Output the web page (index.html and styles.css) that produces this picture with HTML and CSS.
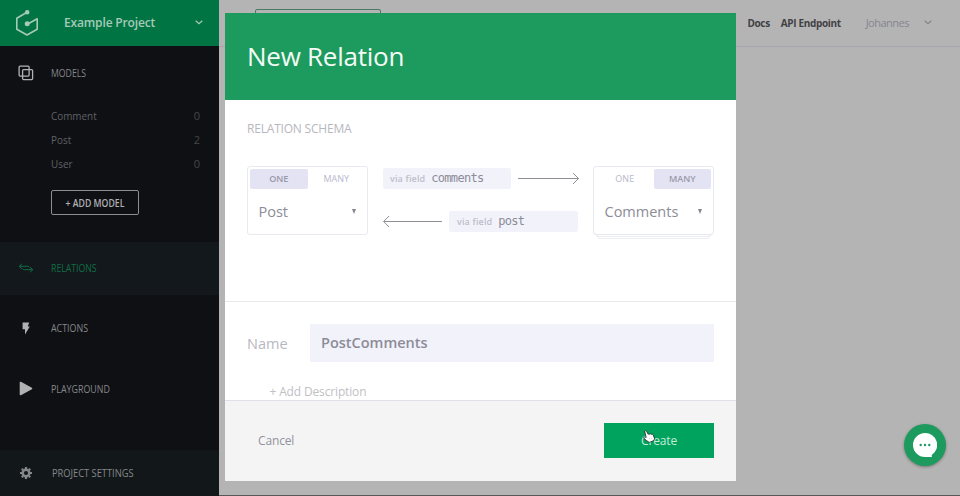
FILE: index.html
```html
<!DOCTYPE html>
<html lang="en">
<head>
<meta charset="utf-8">
<title>New Relation</title>
<link rel="stylesheet" href="styles.css">
</head>
<body>
<div class="app">
  <aside class="sidebar">
    <div class="project">
      <svg class="logo" width="24" height="28" viewBox="0 0 24 28" fill="none" stroke="#a6cab8" stroke-width="1.6" stroke-linejoin="round" stroke-linecap="round"><path d="M12 3.3 1.8 9.2v11L12 26l10.2-5.8V9.8L12.8 15"/><circle cx="12.2" cy="3.2" r="1.5" fill="#a6cab8"/><circle cx="12.2" cy="14.8" r="1.7" fill="#a6cab8"/></svg>
      <span class="project-name">Example Project</span>
      <svg width="8" height="5" viewBox="0 0 8 5" fill="none" stroke="#a6cab8" stroke-width="1.2"><path d="M.7.8 4 3.7 7.3.8"/></svg>
    </div>
    <div class="nav models">
      <span class="icon"><svg width="16" height="16" viewBox="0 0 16 16" fill="none" stroke="#b0b1b3" stroke-width="1.3"><rect x="1.1" y="1.1" width="10" height="10" rx="1"/><rect x="4.6" y="4.6" width="10" height="10" rx="1"/></svg></span>
      <span class="nav-label">MODELS</span>
    </div>
    <ul class="model-list">
      <li><span class="model-name">Comment</span><span class="count">0</span></li>
      <li><span class="model-name">Post</span><span class="count">2</span></li>
      <li><span class="model-name">User</span><span class="count">0</span></li>
    </ul>
    <button class="add-model"><span>+ ADD MODEL</span></button>
    <div class="nav relations">
      <span class="icon"><svg width="16" height="10" viewBox="0 0 16 10" fill="none" stroke="#126d46" stroke-width="1"><path d="M4 .8 1.2 3.3 4 5.8M1.2 3.3h8.5q1.5 0 1.5 1M12 4.2l2.8 2.5L12 9.2M14.8 6.7H6.3q-1.5 0-1.5-1"/></svg></span>
      <span class="nav-label">RELATIONS</span>
    </div>
    <div class="nav actions">
      <span class="icon"><svg width="8" height="13" viewBox="0 0 8 13" fill="#b0b1b3"><path d="M.6.5h6.6L5.8 4.4h2L3 12.4V7.2H.6z"/></svg></span>
      <span class="nav-label">ACTIONS</span>
    </div>
    <div class="nav playground">
      <span class="icon"><svg width="14" height="15" viewBox="0 0 14 15" fill="#b0b1b3" stroke="#b0b1b3" stroke-width="1.6" stroke-linejoin="round"><path d="M1.5 1.5v12L12.5 7.5z"/></svg></span>
      <span class="nav-label">PLAYGROUND</span>
    </div>
    <div class="nav settings">
      <span class="icon"><svg width="12" height="12" viewBox="0 0 12 12" fill="none" stroke="#85878a"><circle cx="6" cy="6" r="3.3" stroke-width="2.4"/><path stroke-width="2.2" d="M6 0v2M6 10v2M0 6h2M10 6h2M1.8 1.8l1.3 1.3M8.9 8.9l1.3 1.3M1.8 10.2l1.3-1.3M8.9 3.1l1.3-1.3"/></svg></span>
      <span class="nav-label">PROJECT SETTINGS</span>
    </div>
  </aside>
  <main class="content">
    <header class="topbar">
      <span class="tab"></span>
      <a class="docs">Docs</a>
      <a class="endpoint">API Endpoint</a>
      <span class="user">Johannes</span>
      <svg width="8" height="5" viewBox="0 0 8 5" fill="none" stroke="#85858d" stroke-width="1.2"><path d="M.7.8 4 3.7 7.3.8"/></svg>
    </header>
  </main>
</div>

<section class="modal">
  <header class="modal-header"><h1>New Relation</h1></header>
  <div class="schema">
    <h2>RELATION SCHEMA</h2>
    <div class="schema-row">
      <div class="card">
        <div class="toggle"><span class="on">ONE</span><span>MANY</span></div>
        <div class="select"><span>Post</span><i class="caret"></i></div>
      </div>
      <div class="links">
        <div class="link">
          <div class="field"><span class="via">via field</span><code>comments</code></div>
          <svg width="62" height="12" viewBox="0 0 62 12" fill="none" stroke="#8f8f98" stroke-width="1"><path d="M0 6.5h60.5M55 1l5.5 5.5L55 12"/></svg>
        </div>
        <div class="link">
          <svg width="60" height="12" viewBox="0 0 60 12" fill="none" stroke="#8f8f98" stroke-width="1"><path d="M59 6.5H.7M6 1 .7 6.5 6 12"/></svg>
          <div class="field"><span class="via">via field</span><code>post</code></div>
        </div>
      </div>
      <div class="card stacked">
        <div class="toggle"><span>ONE</span><span class="on">MANY</span></div>
        <div class="select"><span>Comments</span><i class="caret"></i></div>
      </div>
    </div>
  </div>
  <div class="details">
    <div class="name-row"><label>Name</label><div class="name-input">PostComments</div></div>
    <div class="add-description">+ Add Description</div>
  </div>
  <footer class="modal-footer">
    <span class="cancel">Cancel</span>
    <button class="create">Create</button>
  </footer>
</section>

<svg class="cursor" width="12" height="13" viewBox="0 0 12 13" fill="#fff" stroke="#222" stroke-width=".8" stroke-linejoin="round"><path d="M1.6 1q1-.9 2 .3l1.5 3q.7-.8 1.6-.1.9-.8 1.8.2 1-.5 1.7.6l1.3 3.4-.5 2.1-4.8 1.9L3.2 10.3.5 7.8q.4-1.6 2.7-.4z"/><path d="m6.2 8 .7 1.6M8.1 7.4l.7 1.6" stroke="#999" stroke-width=".4"/></svg>
<div class="chat">
  <svg width="24" height="24" viewBox="0 0 24 24"><path fill="#fff" d="M12 0a12 12 0 1 0 0 24h6.8V22A12 12 0 0 0 12 0z"/><g fill="#1d9b5e"><circle cx="7.7" cy="12" r="1.2"/><circle cx="12" cy="12" r="1.2"/><circle cx="16.3" cy="12" r="1.2"/></g></svg>
</div>
</body>
</html>
```
FILE: styles.css
```css
* { box-sizing: border-box; }
body { margin: 0; width: 960px; height: 496px; overflow: hidden; background: #b4b4b4; font-family: "Open Sans", sans-serif; position: relative; }
h1, h2, ul { margin: 0; padding: 0; font-weight: 400; list-style: none; }
button { font-family: inherit; padding: 0; }
svg { display: block; flex: none; }
.app { display: grid; grid-template-columns: 219px 1fr; height: 496px; border-bottom: 1px solid #55575a; }
.sidebar { background: #0f1014; display: flex; flex-direction: column; color: #85878a; height: 496px; }
.project { height: 46px; background: #007443; display: flex; align-items: center; padding: 0 16px 1px 15px; flex: none; }
.project-name { color: #a6cab8; font-size: 12px; font-weight: 600; margin-left: 25px; flex: 1; letter-spacing: -.15px; }
.nav { display: flex; align-items: center; font-size: 10.5px; flex: none; }
.icon { flex: none; width: 51px; display: flex; justify-content: center; }
.nav-label { transform: scaleX(.845); transform-origin: left center; }
.models { height: 54px; }
.models .nav-label, .relations .nav-label { transform: scaleX(.83); }
.model-list { padding: 4px 19px 0 51px; font-size: 11px; color: #5f6166; }
.model-list li { display: flex; justify-content: space-between; height: 24px; line-height: 24px; }
.model-name { transform: scaleX(.9); transform-origin: left center; }
.count { color: #45474b; }
.add-model { margin: 14px 0 0 51px; width: 88px; height: 25px; flex: none; background: transparent; border: 1px solid #8d8e91; border-radius: 2px; color: #b0b1b3; font-size: 10px; font-weight: 600; }
.add-model span { display: block; transform: scaleX(.87); white-space: nowrap; }
.relations { height: 53px; margin-top: 27px; padding-bottom: 1px; background: #12181b; color: #126d46; }
.actions { height: 66px; }
.playground { height: 55px; }
.settings { margin-top: auto; height: 46px; padding-bottom: 1px; background: #12181a; font-size: 11px; }
.settings .nav-label { margin-left: 1px; }
.topbar { height: 47px; border-bottom: 1px solid #a5a5ad; display: flex; align-items: center; padding: 0 28px 1px 0; color: #414144; font-size: 10px; font-weight: 700; letter-spacing: -.35px; }
.tab { width: 126px; height: 29px; margin: 1px 0 0 36px; border: 1px solid #477b64; border-radius: 2px; }
.docs { margin-left: auto; }
.endpoint { margin-left: 11px; }
.user { margin: 0 15px 0 25px; color: #86868e; font-size: 11px; font-weight: 400; letter-spacing: -.5px; }
.modal { position: absolute; left: 225px; top: 13px; width: 511px; height: 468px; display: flex; flex-direction: column; background: #fff; }
.modal-header { height: 87px; background: #1d9b5e; display: flex; align-items: center; padding: 0 22px 2px; }
h1 { color: #f4fbf7; font-size: 26px; letter-spacing: -.25px; }
.schema { height: 202px; border-bottom: 1px solid #e9e9ed; padding: 20px 22px 0; }
h2 { color: #b7b7c0; font-size: 12px; line-height: 17px; letter-spacing: -.2px; }
.schema-row { display: flex; margin-top: 29px; justify-content: space-between; }
.card { position: relative; width: 121px; height: 69px; border: 1px solid #e9e9f2; border-radius: 3px; background: #fff; padding: 2px; }
.toggle { display: flex; height: 20px; font-size: 9px; color: #b7b7cc; }
.toggle span { flex: 1; display: flex; align-items: center; justify-content: center; border-radius: 2px; padding-bottom: 2px; }
.toggle .on { background: #e4e3f3; color: #9999a9; font-weight: 600; }
.select { height: 44px; padding: 1px 9px 0 8.5px; display: flex; align-items: center; justify-content: space-between; color: #8c8c98; font-size: 14.5px; }
.caret { border: 2.5px solid transparent; border-top: 5px solid #85858f; border-bottom: 0; }
.stacked::before, .stacked::after { content: ""; position: absolute; border: 1px solid #ededf4; border-top: 0; border-radius: 0 0 4px 4px; height: 3px; top: 66px; left: 1px; right: 1px; }
.stacked::after { top: 68px; left: 3px; right: 3px; }
.links { width: 197px; margin-left: 2px; }
.link { display: flex; align-items: center; justify-content: space-between; height: 21px; margin-top: 2px; }
.link svg { margin-bottom: 1px; }
.link + .link { margin-top: 22px; width: 195px; }
.field { width: 128px; height: 21px; background: #f2f2fb; border-radius: 2px; display: flex; align-items: center; padding-left: 7px; }
.link + .link .field { width: 129px; padding-left: 8px; }
.via { font-size: 9px; font-weight: 600; color: #bdbdca; margin-right: 6px; letter-spacing: .15px; }
code { font-family: "DejaVu Sans Mono", monospace; font-size: 12px; letter-spacing: -.7px; color: #8c8c98; padding-bottom: 1px; }
.details { height: 98px; padding: 22px 22px 0; }
.name-row { display: flex; align-items: center; }
label { width: 63px; color: #b7b7c0; font-size: 14.5px; }
.name-input { flex: 1; height: 38px; line-height: 38px; background: #f2f2fb; color: #8c8c98; font-size: 14.5px; font-weight: 600; padding-left: 11px; }
.add-description { margin: 21px 0 0 22.5px; color: #bfbfc4; font-size: 12px; line-height: 17px; letter-spacing: -.15px; }
.modal-footer { flex: 1; background: #f4f4f4; border-top: 1px solid #e0e0e8; display: flex; align-items: center; justify-content: space-between; padding: 0 22px 2px 33px; }
.cancel { color: #92929d; font-size: 12px; letter-spacing: -.15px; }
.create { width: 110px; height: 35px; background: #00a35e; border: 0; color: #c5ecd9; font-size: 12px; letter-spacing: -.15px; }
.cursor { position: absolute; left: 643px; top: 430px; }
.chat { position: absolute; left: 904px; top: 424px; width: 42px; height: 42px; border-radius: 50%; background: #1d9b5e; box-shadow: 0 1px 3px rgba(0,0,0,.35); display: flex; align-items: center; justify-content: center; }
```
